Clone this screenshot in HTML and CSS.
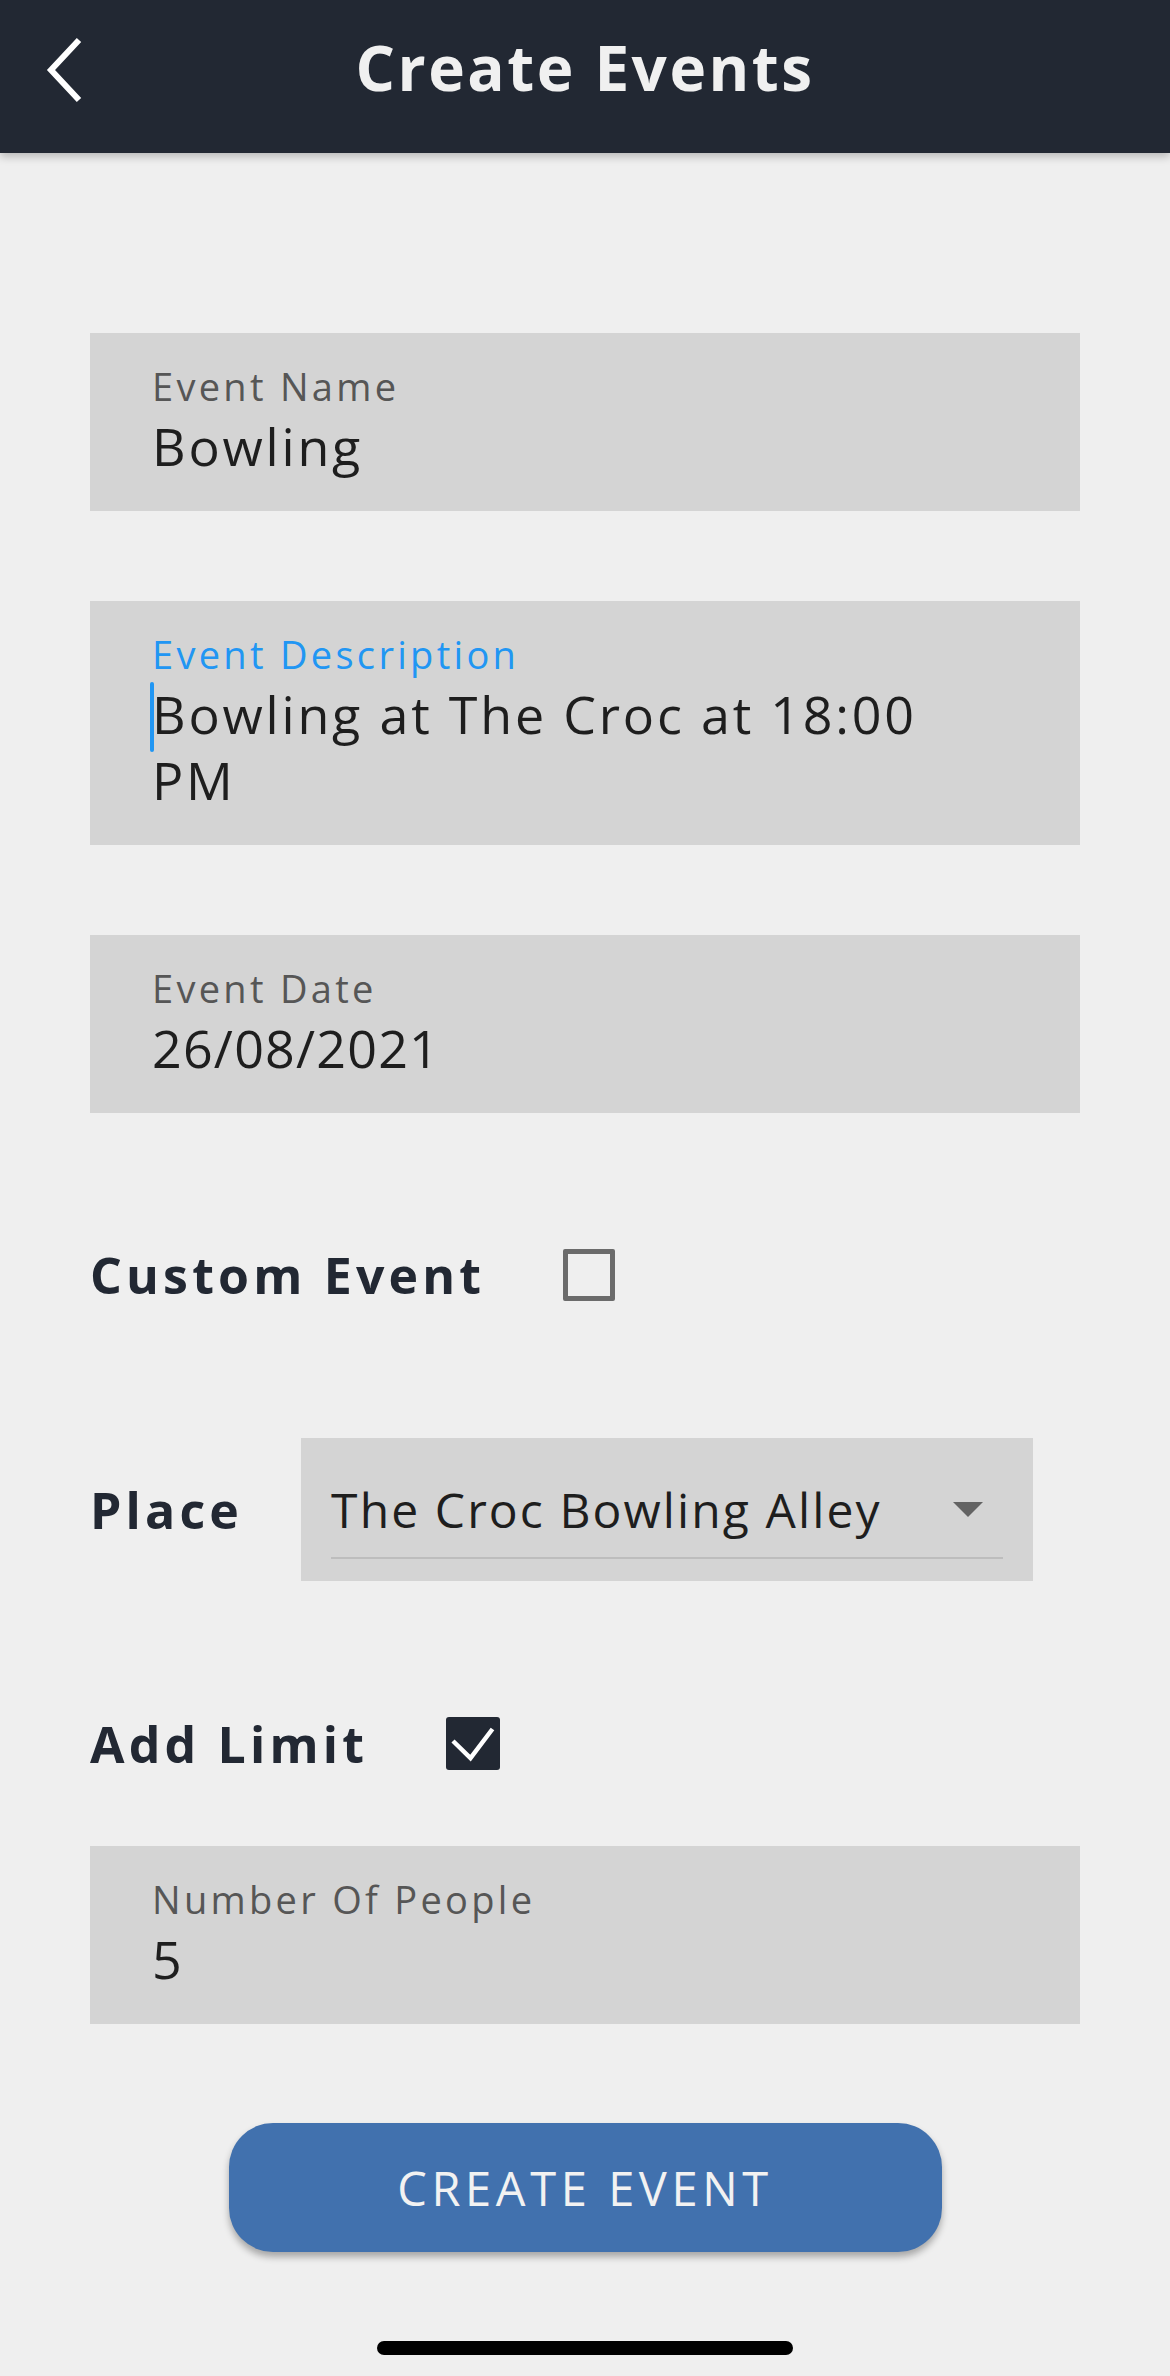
FILE: index.html
```html
<!DOCTYPE html>
<html lang="en">
<head>
<meta charset="utf-8">
<title>Create Events</title>
<link rel="stylesheet" href="styles.css">
</head>
<body>
<div class="screen">
  <header class="topbar">
    <svg class="back" width="40" height="66" viewBox="0 0 40 66" aria-hidden="true">
      <polyline points="34,3 6,33 34,63" fill="none" stroke="#ffffff" stroke-width="6" stroke-linejoin="miter"/>
    </svg>
    <h1 class="title">Create Events</h1>
  </header>

  <main class="form">
    <div class="field">
      <div class="label">Event Name</div>
      <div class="value">Bowling</div>
    </div>

    <div class="field">
      <div class="label focused">Event Description</div>
      <div class="value"><span class="caret"></span>Bowling at The Croc at 18:00<br>PM</div>
    </div>

    <div class="field">
      <div class="label">Event Date</div>
      <div class="value value-num">26/08/2021</div>
    </div>

    <div class="check-row row-custom">
      <span class="row-label">Custom Event</span>
      <span class="checkbox"></span>
    </div>

    <div class="place-row">
      <span class="row-label">Place</span>
      <div class="select">
        <div class="select-inner">
          <span class="select-text">The Croc Bowling Alley</span>
          <svg class="caret-down" width="30" height="15" viewBox="0 0 30 15" aria-hidden="true">
            <polygon points="0,0 30,0 15,15" fill="#636363"/>
          </svg>
        </div>
      </div>
    </div>

    <div class="check-row row-limit">
      <span class="row-label">Add Limit</span>
      <span class="checkbox checked">
        <svg width="54" height="53" viewBox="0 0 54 53" aria-hidden="true">
          <polyline points="7,24 24.5,41 46.5,12" fill="none" stroke="#ffffff" stroke-width="4.5"/>
        </svg>
      </span>
    </div>

    <div class="field field-people">
      <div class="label">Number Of People</div>
      <div class="value value-num">5</div>
    </div>

    <div class="actions">
      <button class="submit" type="button">CREATE EVENT</button>
    </div>
  </main>

  <div class="home-bar"><span class="home-indicator"></span></div>
</div>
</body>
</html>
```

FILE: styles.css
```css
* {
  box-sizing: border-box;
}

html, body {
  margin: 0;
  padding: 0;
  background: #efefef;
}

body {
  font-family: "Open Sans", "Liberation Sans", sans-serif;
  color: #1f1f1f;
}

.screen {
  width: 1170px;
  height: 2376px;
  display: flex;
  flex-direction: column;
  background: #efefef;
  overflow: hidden;
}

/* ---------- header ---------- */
.topbar {
  position: relative;
  height: 153px;
  flex: none;
  background: #222833;
  display: flex;
  align-items: center;
  justify-content: center;
  box-shadow: 0 4px 8px rgba(0, 0, 0, 0.22);
  z-index: 1;
}

.back {
  position: absolute;
  left: 45px;
  top: 37px;
}

.title {
  margin: 0 0 20px 0;
  font-size: 62px;
  line-height: 80px;
  font-weight: 700;
  color: #f0f0f0;
  letter-spacing: 2.5px;
}

/* ---------- form ---------- */
.form {
  display: flex;
  flex-direction: column;
  padding: 180px 90px 0 90px;
}

.field {
  background: #d4d4d4;
  padding: 30px 62px 32px 62px;
  margin-bottom: 90px;
}

.label {
  font-size: 38px;
  line-height: 46px;
  color: #565656;
  letter-spacing: 3.3px;
}

.label.focused {
  color: #2196f3;
}

.value {
  position: relative;
  margin-top: 4px;
  font-size: 52px;
  line-height: 66px;
  color: #1e1e1e;
  letter-spacing: 2.8px;
}

.value-num {
  letter-spacing: 1.2px;
}

.caret {
  position: absolute;
  left: -2px;
  top: 1px;
  width: 4px;
  height: 70px;
  border-radius: 2px;
  background: #2196f3;
}

/* ---------- rows ---------- */
.row-label {
  font-size: 50px;
  font-weight: 700;
  color: #222833;
  letter-spacing: 4.2px;
  line-height: 60px;
}

.check-row {
  display: flex;
  align-items: center;
  height: 52px;
}

.row-custom {
  margin-top: 46px;
}

.check-row .checkbox {
  margin-left: 78px;
}

.checkbox {
  width: 52px;
  height: 52px;
  border: 5px solid #6b6b6b;
  border-radius: 2px;
  display: flex;
  align-items: center;
  justify-content: center;
}

.checkbox.checked {
  width: 54px;
  height: 53px;
  border: none;
  background: #222833;
  border-radius: 3px;
}

.checkbox.checked svg {
  display: block;
}

.place-row {
  display: flex;
  align-items: center;
  margin-top: 137px;
}

.select {
  margin-left: 58px;
  width: 732px;
  height: 143px;
  background: #d4d4d4;
  padding: 24px 30px 22px 30px;
}

.select-inner {
  height: 97px;
  display: flex;
  align-items: center;
  justify-content: space-between;
  border-bottom: 2px solid #bdbdbd;
  padding-right: 20px;
}

.select-text {
  font-size: 48px;
  color: #1e1e1e;
  letter-spacing: 2.1px;
}

.row-limit {
  margin-top: 136px;
  height: 53px;
}

.field-people {
  margin-top: 76px;
  margin-bottom: 99px;
}

/* ---------- button ---------- */
.actions {
  display: flex;
  justify-content: center;
}

.submit {
  width: 713px;
  height: 129px;
  border: none;
  border-radius: 44px;
  background: #4171ae;
  color: #f2f2f2;
  font-family: "Open Sans", "Liberation Sans", sans-serif;
  font-size: 47px;
  letter-spacing: 4.6px;
  box-shadow: 0 5px 7px rgba(0, 0, 0, 0.3);
  padding: 0;
}

/* ---------- home indicator ---------- */
.home-bar {
  margin-top: auto;
  height: 35px;
  display: flex;
  justify-content: center;
  align-items: flex-start;
}

.home-indicator {
  width: 416px;
  height: 14px;
  border-radius: 7px;
  background: #000000;
}
```
